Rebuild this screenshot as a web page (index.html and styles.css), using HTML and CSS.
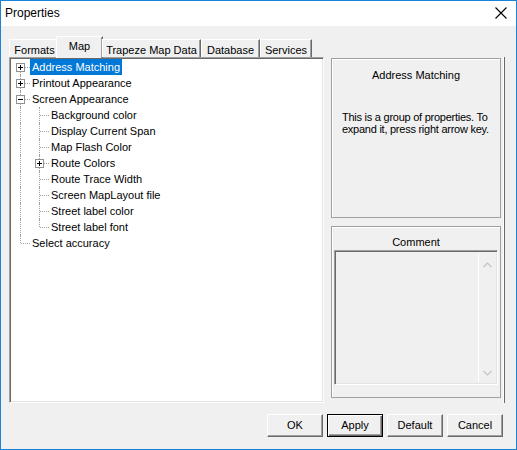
FILE: index.html
```html
<!DOCTYPE html>
<html>
<head>
<meta charset="utf-8">
<link rel="stylesheet" href="styles.css">
</head>
<body>
<div class="window">
  <div class="titlebar">
    <span class="title">Properties</span>
    <svg class="close" width="12" height="12" viewBox="0 0 12 12"><path d="M0.5 0.5L11.5 11.5M11.5 0.5L0.5 11.5" stroke="#000" stroke-width="1.1" fill="none"/></svg>
  </div>
  <div class="content">
    <div class="tabs">
      <div class="tab t-formats">Formats</div>
      <div class="tab t-map active">Map</div>
      <div class="tab t-trapeze">Trapeze Map Data</div>
      <div class="tab t-db">Database</div>
      <div class="tab t-services">Services</div>
    </div>
    <div class="panel">
      <div class="tree">
        <div class="row"><div class="cell first h"><svg class="box" width="9" height="9"><rect x="0.5" y="0.5" width="8" height="8" fill="#fff" stroke="#919191"/><path d="M2 4.5h5M4.5 2v5" stroke="#000"/></svg></div><span class="label sel">Address Matching</span></div>
        <div class="row"><div class="cell v h"><svg class="box" width="9" height="9"><rect x="0.5" y="0.5" width="8" height="8" fill="#fff" stroke="#919191"/><path d="M2 4.5h5M4.5 2v5" stroke="#000"/></svg></div><span class="label">Printout Appearance</span></div>
        <div class="row"><div class="cell v h"><svg class="box" width="9" height="9"><rect x="0.5" y="0.5" width="8" height="8" fill="#fff" stroke="#919191"/><path d="M2 4.5h5" stroke="#000"/></svg></div><span class="label">Screen Appearance</span></div>
        <div class="row"><div class="cell v"></div><div class="cell v h"></div><span class="label">Background color</span></div>
        <div class="row"><div class="cell v"></div><div class="cell v h"></div><span class="label">Display Current Span</span></div>
        <div class="row"><div class="cell v"></div><div class="cell v h"></div><span class="label">Map Flash Color</span></div>
        <div class="row"><div class="cell v"></div><div class="cell v h"><svg class="box" width="9" height="9"><rect x="0.5" y="0.5" width="8" height="8" fill="#fff" stroke="#919191"/><path d="M2 4.5h5M4.5 2v5" stroke="#000"/></svg></div><span class="label">Route Colors</span></div>
        <div class="row"><div class="cell v"></div><div class="cell v h"></div><span class="label">Route Trace Width</span></div>
        <div class="row"><div class="cell v"></div><div class="cell v h"></div><span class="label">Screen MapLayout file</span></div>
        <div class="row"><div class="cell v"></div><div class="cell v h"></div><span class="label">Street label color</span></div>
        <div class="row"><div class="cell v"></div><div class="cell end h"></div><span class="label">Street label font</span></div>
        <div class="row"><div class="cell end h"></div><span class="label">Select accuracy</span></div>
      </div>
      <div class="side">
        <div class="desc">
          <div class="desc-title">Address Matching</div>
          <div class="desc-text">This is a group of properties. To expand it, press right arrow key.</div>
        </div>
        <div class="comment">
          <div class="comment-label">Comment</div>
          <div class="textarea">
            <div class="text-body"></div>
            <div class="scrollbar">
              <svg width="9" height="6" viewBox="0 0 9 6"><path d="M0.5 5L4.5 1L8.5 5" stroke="#c4c4c4" stroke-width="1.2" fill="none"/></svg>
              <svg width="9" height="6" viewBox="0 0 9 6"><path d="M0.5 1L4.5 5L8.5 1" stroke="#c4c4c4" stroke-width="1.2" fill="none"/></svg>
            </div>
          </div>
        </div>
      </div>
    </div>
    <div class="buttons">
      <div class="btn">OK</div>
      <div class="btn default">Apply</div>
      <div class="btn">Default</div>
      <div class="btn">Cancel</div>
    </div>
  </div>
</div>
</body>
</html>
```
FILE: styles.css
```css
html, body {
  margin: 0;
  padding: 0;
  background: #ffffff;
}
.window {
  width: 517px;
  height: 450px;
  box-sizing: border-box;
  border: 1px solid #1883d7;
  background: #f0f0f0;
  font-family: "Liberation Sans", Arial, sans-serif;
  font-size: 11px;
  color: #000;
  display: flex;
  flex-direction: column;
}
.titlebar {
  height: 25px;
  background: #ffffff;
  display: flex;
  align-items: center;
  justify-content: space-between;
  padding: 0 9px 0 4px;
  flex: none;
}
.title {
  font-size: 12px;
  margin-top: -1px;
}
.close {
  display: block;
  margin-top: -1px;
}
.content {
  padding: 10px 11px 0 8px;
  display: flex;
  flex-direction: column;
}
.tabs {
  display: flex;
  align-items: flex-end;
  height: 21px;
  position: relative;
  z-index: 1;
}
.tab {
  height: 18px;
  box-sizing: border-box;
  line-height: 16px;
  padding-top: 2px;
  text-align: center;
  border-top: 1px solid #ffffff;
  border-left: 1px solid #ffffff;
  border-right: 1px solid #696969;
  box-shadow: inset -1px 0 0 #a0a0a0;
  background: #f0f0f0;
}
.t-formats { width: 49px; padding-left: 2px; }
.t-map { width: 44px; }
.t-trapeze { width: 99px; }
.t-db { width: 59px; }
.t-services { width: 52px; }
.tab.active {
  padding-top: 0;
  line-height: 18px;
  margin-bottom: -1px;
  height: 22px;
  margin-left: -2px;
  margin-right: -1px;
  width: 47px;
}
.panel {
  display: flex;
  height: 346px;
  border-right: 1px solid #696969;
  box-shadow: inset -1px 0 0 #ffffff;
  padding-right: 3px;
}
.tree {
  width: 315px;
  box-sizing: border-box;
  background: #ffffff;
  border: 1px solid;
  border-color: #a0a0a0 #ffffff #ffffff #a0a0a0;
  box-shadow: inset 1px 1px 0 #696969, inset -1px -1px 0 #e3e3e3;
  padding: 1px 0 0 1px;
  flex: none;
}
.row {
  display: flex;
  height: 16px;
  align-items: center;
}
.cell {
  width: 19px;
  height: 16px;
  position: relative;
  flex: none;
}
.cell.v::before,
.cell.first::before,
.cell.end::before {
  content: "";
  position: absolute;
  left: 9px;
  top: 0;
  bottom: 0;
  border-left: 1px dotted #a0a0a0;
}
.cell.first::before { top: 8px; }
.cell.end::before { bottom: 8px; }
.cell.h::after {
  content: "";
  position: absolute;
  left: 10px;
  right: 0;
  top: 8px;
  border-top: 1px dotted #a0a0a0;
}
.box {
  position: absolute;
  left: 5px;
  top: 4px;
  display: block;
  z-index: 1;
}
.label {
  padding: 0 2px;
  line-height: 16px;
  white-space: nowrap;
}
.label.sel {
  background: #0078d7;
  color: #ffffff;
}
.side {
  margin-left: 7px;
  width: 171px;
  display: flex;
  flex-direction: column;
}
.desc {
  margin-top: 1px;
  height: 160px;
  box-sizing: border-box;
  border: 1px solid #a0a0a0;
  box-shadow: inset 1px 1px 0 #ffffff;
}
.desc-title {
  text-align: center;
  line-height: 13px;
  padding-top: 10px;
}
.desc-text {
  margin-top: 29px;
  padding: 0 2px 0 10px;
  line-height: 12px;
  letter-spacing: -0.25px;
}
.comment {
  margin-top: 8px;
  height: 172px;
  box-sizing: border-box;
  border: 1px solid #a0a0a0;
  box-shadow: inset 1px 1px 0 #ffffff;
  padding: 9px 2px 12px 2px;
  display: flex;
  flex-direction: column;
}
.comment-label {
  text-align: center;
  line-height: 13px;
  height: 13px;
  margin-bottom: 1px;
}
.textarea {
  flex: 1;
  display: flex;
  border: 1px solid;
  border-color: #a0a0a0 #ffffff #ffffff #a0a0a0;
  box-shadow: inset 1px 1px 0 #696969, inset -1px -1px 0 #e3e3e3;
  padding: 2px 2px 2px 2px;
  background: #f0f0f0;
}
.text-body {
  flex: 1;
}
.scrollbar {
  width: 16px;
  border-left: 1px solid #ffffff;
  display: flex;
  flex-direction: column;
  justify-content: space-between;
  align-items: center;
  padding: 9px 0 6px 0;
}
.scrollbar svg { display: block; }
.buttons {
  display: flex;
  justify-content: flex-end;
  gap: 4px;
  margin-top: 11px;
  padding-right: 2px;
}
.btn {
  width: 56px;
  height: 23px;
  box-sizing: border-box;
  text-align: center;
  line-height: 21px;
  border: 1px solid;
  border-color: #ffffff #696969 #696969 #ffffff;
  box-shadow: inset -1px -1px 0 #a0a0a0;
  background: #f0f0f0;
}
.btn.default {
  border: 1px solid #000000;
  box-shadow: inset 1px 1px 0 #ffffff, inset -1px -1px 0 #696969, inset -2px -2px 0 #a0a0a0;
}
```
